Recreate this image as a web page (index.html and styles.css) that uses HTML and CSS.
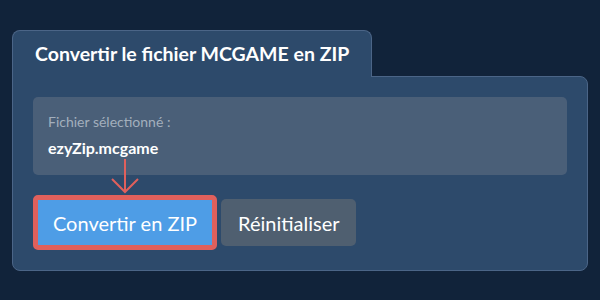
FILE: index.html
```html
<!DOCTYPE html>
<html lang="fr">
<head>
    <meta charset="UTF-8">
    <meta name="viewport" content="width=device-width, initial-scale=1.0">
    <title>Convertir MCGAME en ZIP</title>
    <link rel="stylesheet" href="styles.css">
</head>
<body>
    <div class="container">
        <div class="tab">Convertir le fichier MCGAME en ZIP</div>
        <div class="panel">
            <div class="file-box">
                <div class="file-label">Fichier sélectionné :</div>
                <div class="file-name">ezyZip.mcgame</div>
            </div>
            <div class="actions">
                <!-- flèche qui pointe vers le bouton -->
                <svg class="arrow" width="30" height="36" viewBox="0 0 30 36">
                    <path d="M15 0 V33 M2 20 L15 33 L28 20" fill="none" stroke="#e0605c" stroke-width="2"/>
                </svg>
                <button class="btn btn-convert">Convertir en ZIP</button>
                <button class="btn btn-reset">Réinitialiser</button>
            </div>
        </div>
    </div>
</body>
</html>
```

FILE: styles.css
```css
body {
    margin: 0;
    padding: 0;
    background-color: #11233a;
    font-family: Lato, "Noto Sans", sans-serif;
    color: #fff;
}

.container {
    width: 576px;
    padding: 30px 12px;
}

.tab {
    display: inline-block;
    position: relative;
    z-index: 1;
    margin-bottom: -1px;
    padding: 11px 22px 11px;
    line-height: 24px;
    font-size: 19.5px;
    font-weight: bold;
    background-color: #2d4a6b;
    border: 1px solid #4b6587;
    border-bottom: none;
    border-radius: 8px 8px 0 0;
}

.panel {
    padding: 20px;
    background-color: #2d4a6b;
    border: 1px solid #4b6587;
    border-radius: 0 8px 8px 8px;
}

.file-box {
    padding: 16px 15px 17px;
    background-color: #4a5f78;
    border-radius: 5px;
}

.file-label {
    font-size: 14px;
    line-height: 18px;
    color: #a3afbd;
    margin-bottom: 7px;
}

.file-name {
    font-size: 16px;
    line-height: 20px;
    font-weight: bold;
}

.actions {
    position: relative;
    display: flex;
    align-items: center;
    gap: 4px;
    margin-top: 20px;
}

.arrow {
    position: absolute;
    left: 77px;
    top: -36px;
}

.btn {
    font-family: Lato, "Noto Sans", sans-serif;
    font-size: 20px;
    color: #fff;
    border: none;
    box-sizing: border-box;
    white-space: nowrap;
    cursor: pointer;
}

.btn-convert {
    height: 55px;
    padding: 0;
    width: 184px;
    background-color: #4e9de6;
    border: 5px solid #e0605c;
    border-radius: 5px;
}

.btn-reset {
    height: 47px;
    padding: 0 17px;
    background-color: #4f5f70;
    border-radius: 5px;
}
```
